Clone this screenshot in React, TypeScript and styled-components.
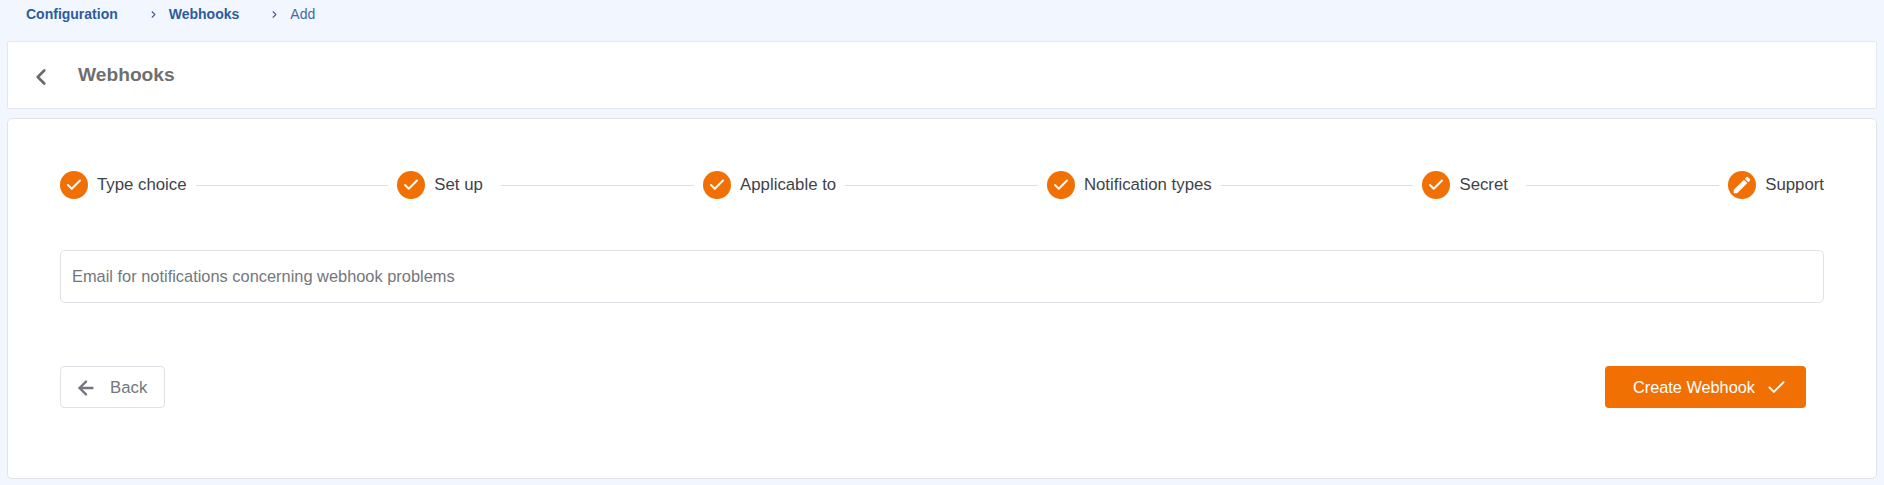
import React from 'react';
import styled, { createGlobalStyle } from 'styled-components';
import { ArrowLeft, Check, ChevronLeft, ChevronRight } from 'lucide-react';
import { MdEdit } from 'react-icons/md';

const GlobalStyle = createGlobalStyle`
  html, body {
    margin: 0;
    padding: 0;
    background: #f2f6fe;
    font-family: "Liberation Sans", Arial, sans-serif;
  }
  * { box-sizing: border-box; }
`;

const Page = styled.div`
  width: 1884px;
  height: 485px;
  padding: 0 7px 6px 7px;
  display: flex;
  flex-direction: column;
  overflow: hidden;
`;

// Breadcrumb
const Breadcrumb = styled.nav`
  height: 41px;
  flex: none;
  display: flex;
  align-items: flex-start;
  padding: 6px 0 0 19px;
  font-size: 14px;
  line-height: 17px;
`;

const Crumb = styled.span<{ $muted?: boolean }>`
  color: ${({ $muted }) => ($muted ? '#3f6ba6' : '#2c5c9c')};
  font-weight: ${({ $muted }) => ($muted ? 400 : 700)};
`;

const CrumbSeparator = styled.span<{ $left: number }>`
  display: flex;
  align-items: center;
  height: 17px;
  margin: 0 10px 0 ${({ $left }) => $left}px;
  color: #3f5f8f;
`;

// Header
const HeaderCard = styled.header`
  height: 68px;
  flex: none;
  background: #fff;
  border: 1px solid #e3e7ef;
  border-radius: 2px;
  display: flex;
  align-items: center;
  padding-left: 20px;
  margin-bottom: 9px;
`;

const BackIcon = styled.span`
  display: flex;
  color: #6b6b6b;
  margin: 3px 24px 0 0;
`;

const Title = styled.h1`
  margin: 0;
  font-size: 19.2px;
  font-weight: 700;
  color: #6f6f6f;
`;

// Main panel
const MainCard = styled.main`
  flex: 1;
  background: #fff;
  border: 1px solid #e0e3ea;
  border-radius: 5px;
  padding: 52px 52px 0 52px;
  display: flex;
  flex-direction: column;
`;

const Stepper = styled.ol`
  list-style: none;
  margin: 0;
  padding: 0;
  display: flex;
  align-items: center;
  height: 28px;
`;

const StepItem = styled.li`
  display: flex;
  align-items: center;
  flex: none;
`;

const StepCircle = styled.span`
  width: 28px;
  height: 28px;
  border-radius: 50%;
  background: #f07004;
  color: #fff;
  display: flex;
  align-items: center;
  justify-content: center;
  flex: none;
`;

const StepLabel = styled.span`
  margin-left: 9px;
  min-width: 58px;
  font-size: 16.8px;
  color: #3f4349;
  white-space: nowrap;
`;

const Connector = styled.span`
  flex: 1;
  height: 1px;
  background: #dcdfe4;
  margin: 0 9px;
`;

const EmailInput = styled.input`
  display: block;
  width: 100%;
  height: 53px;
  margin-top: 51px;
  padding: 0 11px;
  border: 1px solid #dfe2e7;
  border-radius: 5px;
  background: #fff;
  font-family: inherit;
  font-size: 16.4px;
  outline: none;

  &::placeholder {
    color: #74767c;
    opacity: 1;
  }
`;

const Actions = styled.div`
  display: flex;
  justify-content: space-between;
  margin-top: 63px;
  padding-right: 18px;
`;

const BackButton = styled.button`
  width: 105px;
  height: 42px;
  display: flex;
  align-items: center;
  padding: 1px 0 0 14px;
  border: 1px solid #dfe2e7;
  border-radius: 4px;
  background: #fff;
  color: #74767c;
  font-family: inherit;
  font-size: 16.8px;

  svg {
    margin-right: 13px;
    flex: none;
  }
`;

const PrimaryButton = styled.button`
  width: 201px;
  height: 42px;
  display: flex;
  align-items: center;
  padding: 0 0 0 28px;
  border: 0;
  border-radius: 4px;
  background: #f07004;
  color: #fff;
  font-family: inherit;
  font-size: 16.3px;

  svg {
    margin-left: 11px;
    flex: none;
  }
`;

const steps = ['Type choice', 'Set up', 'Applicable to', 'Notification types', 'Secret', 'Support'];

export default function App() {
  return (
    <Page>
      <GlobalStyle />
      <Breadcrumb aria-label="Breadcrumb">
        <Crumb>Configuration</Crumb>
        <CrumbSeparator $left={30}>
          <ChevronRight size={11} strokeWidth={2.4} />
        </CrumbSeparator>
        <Crumb>Webhooks</Crumb>
        <CrumbSeparator $left={30}>
          <ChevronRight size={11} strokeWidth={2.4} />
        </CrumbSeparator>
        <Crumb $muted>Add</Crumb>
      </Breadcrumb>

      <HeaderCard>
        <BackIcon>
          <ChevronLeft size={26} strokeWidth={2.5} />
        </BackIcon>
        <Title>Webhooks</Title>
      </HeaderCard>

      <MainCard>
        <Stepper>
          {steps.map((label, i) => (
            <React.Fragment key={label}>
              <StepItem>
                <StepCircle>
                  {i === steps.length - 1 ? <MdEdit size={22} /> : <Check size={18} strokeWidth={2.6} />}
                </StepCircle>
                <StepLabel>{label}</StepLabel>
              </StepItem>
              {i < steps.length - 1 && <Connector />}
            </React.Fragment>
          ))}
        </Stepper>

        <EmailInput placeholder="Email for notifications concerning webhook problems" />

        <Actions>
          <BackButton>
            <ArrowLeft size={22} strokeWidth={2.6} />
            Back
          </BackButton>
          <PrimaryButton>
            Create Webhook
            <Check size={21} strokeWidth={2.2} />
          </PrimaryButton>
        </Actions>
      </MainCard>
    </Page>
  );
}
